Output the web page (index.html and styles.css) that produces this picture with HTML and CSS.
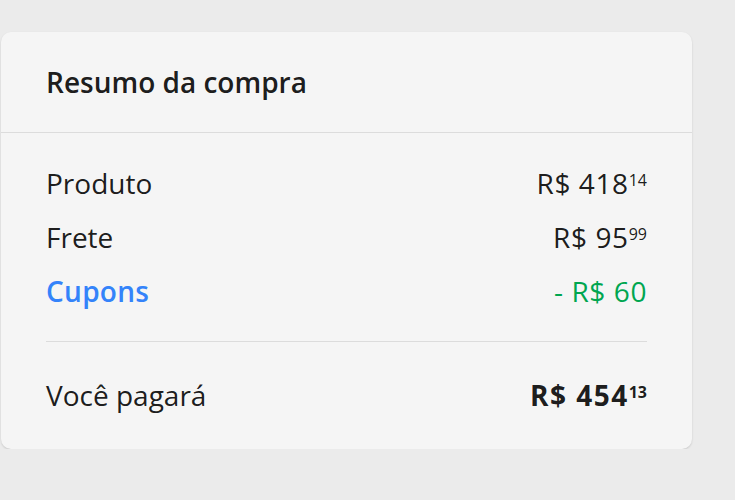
FILE: index.html
```html
<!DOCTYPE html>
<html lang="pt-BR">
<head>
<meta charset="utf-8">
<title>Resumo da compra</title>
<link rel="stylesheet" href="styles.css">
</head>
<body>
<section class="card">
  <header class="card-header">
    <h2 class="title">Resumo da compra</h2>
  </header>
  <div class="card-body">
    <div class="rows">
      <div class="row">
        <span class="label">Produto</span>
        <span class="price">R$ 418<sup class="cents">14</sup></span>
      </div>
      <div class="row">
        <span class="label">Frete</span>
        <span class="price">R$ 95<sup class="cents">99</sup></span>
      </div>
      <div class="row">
        <span class="label label-link">Cupons</span>
        <span class="price price-discount">- R$ 60</span>
      </div>
    </div>
    <div class="row row-total">
      <span class="label">Você pagará</span>
      <span class="price price-total">R$ 454<sup class="cents">13</sup></span>
    </div>
  </div>
</section>
</body>
</html>
```

FILE: styles.css
```css
* { box-sizing: border-box; }

html, body {
  margin: 0;
  padding: 0;
  background: #ebebeb;
}

body {
  font-family: "Open Sans", Arial, sans-serif;
  color: rgba(0, 0, 0, 0.9);
  padding: 32px 0 0 1px;
}

.card {
  width: 691px;
  background: #f5f5f5;
  border-radius: 10px;
  box-shadow: 0 1px 2px rgba(0, 0, 0, 0.15);
}

.card-header {
  height: 101px;
  display: flex;
  align-items: center;
  padding: 0 45px;
  border-bottom: 1px solid rgba(0, 0, 0, 0.1);
}

.title {
  margin: 0;
  font-size: 28px;
  font-weight: 600;
  line-height: 34px;
}

.card-body {
  padding: 23px 45px 27px;
}

.rows {
  border-bottom: 1px solid rgba(0, 0, 0, 0.1);
  padding-bottom: 23px;
  margin-bottom: 26px;
}

.row {
  display: flex;
  justify-content: space-between;
  align-items: center;
  height: 54px;
  font-size: 28px;
  line-height: 34px;
}

.label-link {
  color: #3483fa;
  font-weight: 600;
  letter-spacing: 0.3px;
}

.price {
  white-space: nowrap;
  letter-spacing: 0.6px;
}

.price-discount {
  color: #00a650;
}

.price-total {
  font-weight: 700;
  letter-spacing: 1.5px;
}

.cents {
  font-size: 16px;
  line-height: 16px;
  vertical-align: top;
  position: relative;
  top: 6px;
  margin-left: 0;
  letter-spacing: 0;
}
```
